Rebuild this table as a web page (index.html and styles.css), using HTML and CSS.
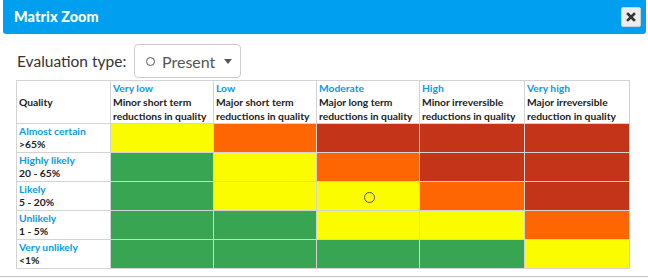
FILE: index.html
```html
<!DOCTYPE html>
<html>
<head>
<meta charset="utf-8">
<link rel="stylesheet" href="styles.css">
</head>
<body>
<div class="dialog">
  <div class="titlebar">
    <span class="title">Matrix Zoom</span>
    <button class="close" aria-label="Close">
      <svg width="10" height="10" viewBox="0 0 10 10"><path d="M2 2 L8 8 M8 2 L2 8" stroke="#333" stroke-width="2.6" stroke-linecap="square"/></svg>
    </button>
  </div>
  <div class="content">
    <div class="eval">
      <span class="eval-label">Evaluation type:</span>
      <div class="select"><span class="ring"></span><span>Present</span><span class="caret"></span></div>
    </div>
    <table class="matrix">
      <colgroup>
        <col class="c0"><col class="c1"><col class="c1"><col class="c1"><col class="c2"><col class="c2">
      </colgroup>
      <thead>
        <tr>
          <th class="qh">Quality</th>
          <th><span class="lbl">Very low</span><br>Minor short term<br>reductions in quality</th>
          <th><span class="lbl">Low</span><br>Major short term<br>reductions in quality</th>
          <th><span class="lbl">Moderate</span><br>Major long term<br>reductions in quality</th>
          <th><span class="lbl">High</span><br>Minor irreversible<br>reductions in quality</th>
          <th><span class="lbl">Very high</span><br>Major irreversible<br>reduction in quality</th>
        </tr>
      </thead>
      <tbody>
        <tr>
          <th class="rh"><span class="lbl">Almost certain</span><br>&gt;65%</th>
          <td class="y"></td><td class="o"></td><td class="r"></td><td class="r"></td><td class="r"></td>
        </tr>
        <tr>
          <th class="rh"><span class="lbl">Highly likely</span><br>20 - 65%</th>
          <td class="g"></td><td class="y"></td><td class="o"></td><td class="r"></td><td class="r"></td>
        </tr>
        <tr>
          <th class="rh"><span class="lbl">Likely</span><br>5 - 20%</th>
          <td class="g"></td><td class="y"></td><td class="y center"><span class="mark"></span></td><td class="o"></td><td class="r"></td>
        </tr>
        <tr>
          <th class="rh"><span class="lbl">Unlikely</span><br>1 - 5%</th>
          <td class="g"></td><td class="g"></td><td class="y"></td><td class="y"></td><td class="o"></td>
        </tr>
        <tr>
          <th class="rh"><span class="lbl">Very unlikely</span><br>&lt;1%</th>
          <td class="g"></td><td class="g"></td><td class="g"></td><td class="g"></td><td class="y"></td>
        </tr>
      </tbody>
    </table>
  </div>
</div>
</body>
</html>
```
FILE: styles.css
```css
html, body {
  margin: 0;
  padding: 0;
  background: #fff;
}
.dialog {
  width: 643px;
  padding: 0 2px 0 3px;
  height: 276px;
  box-sizing: content-box;
  border-right: 1px solid #c5c5c5;
  border-bottom: 1px solid #c5c5c5;
  background: #fff;
  display: flex;
  flex-direction: column;
}
.titlebar {
  height: 34px;
  background: #009fef;
  border-radius: 0 0 3px 3px;
  display: flex;
  align-items: center;
  justify-content: space-between;
  padding: 0 5px 0 11px;
  flex: none;
}
.title {
  color: #fff;
  font-family: Lato, "Open Sans", sans-serif;
  font-weight: 900;
  font-size: 14.4px;
  letter-spacing: 0.1px;
  margin-top: -1px;
}
.close {
  width: 20px;
  height: 20px;
  padding: 0;
  margin: 0;
  border: 1px solid #d0d0d0;
  background: #ececec;
  border-radius: 2px;
  display: flex;
  align-items: center;
  justify-content: center;
  margin-top: -1px;
}
.content {
  padding: 0 0 0 13px;
  flex: 1;
}
.eval {
  display: flex;
  align-items: center;
  height: 34px;
  margin-top: 10px;
  font-family: Lato, sans-serif;
  font-size: 15.5px;
}
.eval-label {
  color: #333;
  width: 117px;
  margin-left: 1px;
}
.select {
  width: 105px;
  height: 32px;
  border: 1px solid #ccc;
  border-radius: 4px;
  display: flex;
  align-items: center;
  color: #555;
  font-size: 16px;
  box-sizing: content-box;
}
.ring {
  width: 7px;
  height: 7px;
  border: 1.2px solid #555;
  border-radius: 50%;
  margin: 0 7px 0 11px;
}
.caret {
  width: 0;
  height: 0;
  border-left: 4.5px solid transparent;
  border-right: 4.5px solid transparent;
  border-top: 5px solid #555;
  margin-left: 9px;
}
.matrix {
  margin-top: 2px;
  border-collapse: collapse;
  table-layout: fixed;
  width: 614px;
  font-family: Lato, sans-serif;
  font-weight: 700;
  font-size: 10.3px;
  color: #222;
}
.c0 { width: 94px; }
.c1 { width: 103px; }
.c2 { width: 105px; }
.matrix th, .matrix td {
  border: 1px solid #d3d3d3;
  padding: 0 2px;
  text-align: left;
  line-height: 14px;
  vertical-align: middle;
  white-space: nowrap;
  overflow: hidden;
}
.matrix thead th {
  height: 40px;
  padding: 0 2px 0 2px;
}
.matrix tbody tr { height: 29px; }
.matrix .rh {
  line-height: 13px;
  padding: 0 2px;
}
.lbl { color: #0a9be3; }
.y { background: #fcfc00; }
.o { background: #fe6603; }
.r { background: #c43418; }
.g { background: #38a553; }
.matrix td.center { text-align: center; }
.mark {
  display: inline-block;
  width: 9px;
  height: 9px;
  border: 1.2px solid #555;
  border-radius: 50%;
  vertical-align: middle;
  margin-left: 2px;
}
```
